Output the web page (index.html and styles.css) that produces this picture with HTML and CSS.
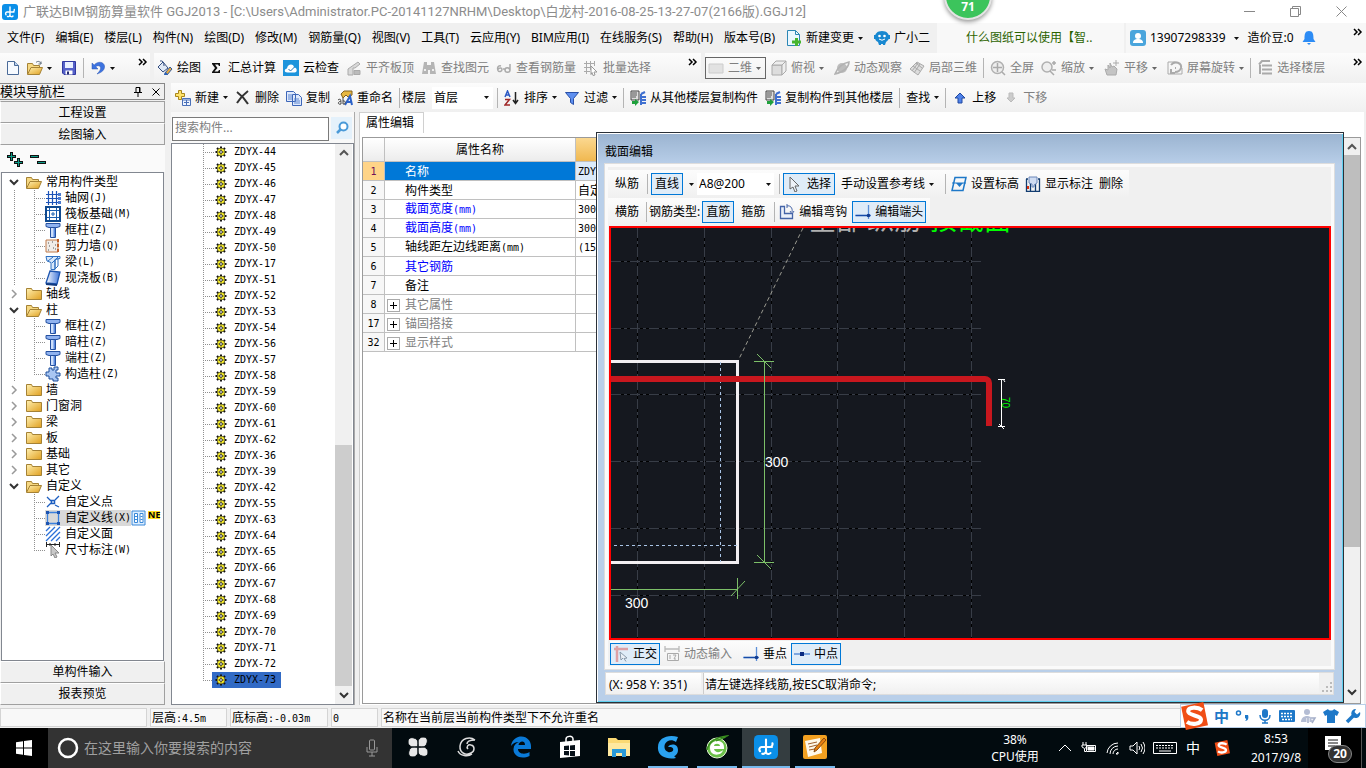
FILE: index.html
```html
<!DOCTYPE html>
<html lang="zh-CN">
<head>
<meta charset="utf-8">
<title>广联达BIM钢筋算量软件 GGJ2013</title>
<link rel="stylesheet" href="styles.css">
</head>
<body>
<svg class="defs" aria-hidden="true">
  <defs>
    <linearGradient id="gold" x1="0" y1="0" x2="1" y2="1"><stop offset="0" stop-color="#fff0b0"/><stop offset="1" stop-color="#e0a020"/></linearGradient>
    <linearGradient id="blu" x1="0" y1="0" x2="1" y2="0"><stop offset="0" stop-color="#fff"/><stop offset="1" stop-color="#3a72d8"/></linearGradient>
  </defs>
  <symbol id="caret" viewBox="0 0 5 3"><path d="M0 0h5L2.500 3z"/></symbol>
  <symbol id="logo" viewBox="0 0 16 16"><rect width="16" height="16" rx="3" fill="#0b8fe8"/><path d="M8 3v8.500a1.700 1.700 0 0 0 3 .500M12 8H5a1.700 1.700 0 0 0-1 2.800M12.300 5.500a2.200 2.200 0 0 1-1.300 2.500M5.500 12.500A2 2 0 0 0 8 11" fill="none" stroke="#fff" stroke-width="1.400" stroke-linecap="round"/></symbol>
  <symbol id="new" viewBox="0 0 16 16"><path d="M2.500 1.500h7l4 4v9h-11z" fill="#f6faff" stroke="#4a6a98"/><path d="M9.500 1.500v4h4" fill="#bcd2ee" stroke="#4a6a98"/></symbol>
  <symbol id="open" viewBox="0 0 16 16"><path d="M.5 14V3.500h5l1 2h6V8" fill="#f6d882" stroke="#a58235"/><path d="M.5 14.500 4 7.500h11.500l-3 7z" fill="url(#gold)" stroke="#a58235"/></symbol>
  <symbol id="openf" viewBox="0 0 16 16"><use href="#open"/><path d="M9 2.500c2-2 4-1 5 1m0-2v2.500h-2.500" fill="none" stroke="#5a6a7a"/></symbol>
  <symbol id="closed" viewBox="0 0 16 16"><path d="M.5 13.500v-11h5l1 2h9v9z" fill="url(#gold)" stroke="#a58235"/></symbol>
  <symbol id="save" viewBox="0 0 16 16"><path d="M1.500 1.500h13v13H3l-1.500-1.500z" fill="#5460c8" stroke="#3038a0"/><path d="M4 2h8v6H4z" fill="#e8efff"/><path d="M4.500 10.500h7v4h-7z" fill="#fff"/><path d="M6 11.500h2v3H6z" fill="#222a70"/></symbol>
  <symbol id="undo" viewBox="0 0 16 16"><path d="M2 3v6h6L5.800 6.800C8 4.500 11.500 6 10.500 9c-.4 1.500-1.500 3-3.500 5 5-1.500 8-4.500 7.500-8C14 2 8 .5 4.200 5z" fill="#3d73e0" stroke="#2a55b0" stroke-width=".5"/></symbol>
  <symbol id="paint" viewBox="0 0 16 16"><path d="m1 7 5-5 5 6-5 4z" fill="#dfe8f5" stroke="#334d80"/><path d="M3 1q4-1 4 5" fill="none" stroke="#334d80"/><path d="m8 13 5-6 2 2-5 6z" fill="#e7a93c" stroke="#345c9c"/><path d="M7 15c0-2 1-3 3-2l1 2z" fill="#2d62b5"/></symbol>
  <symbol id="sigma" viewBox="0 0 16 16"><path d="M4 3h8v3h-1l-1-1.500H7L9.500 8l-3 3.500H10l1-1.500h1V13H4v-1l3-4-3-4z" fill="#111"/></symbol>
  <symbol id="cloud" viewBox="0 0 16 16"><rect width="16" height="16" fill="#1d94dc"/><path d="M4.500 12.500c-4 0-3-4-.5-4 .5-5 7-5 7-1 3-.5 4 5 .5 5z" fill="#fff"/><path d="m5.500 9 2 2 4-4" fill="none" stroke="#1d70b0"/></symbol>
  <symbol id="align" viewBox="0 0 16 16"><path d="M2 9 12 2l2 2-5 4H7v7H2z" fill="#d8d8d8" stroke="#aaa"/><path d="M8 10.500h6v4H8z" fill="#bbb" stroke="#aaa"/></symbol>
  <symbol id="bino" viewBox="0 0 16 16"><path d="M3 2h3v3h4V2h3l2 12H9v-4H7v4H1z" fill="#b5b5b5"/><path d="M3 10h2m6 0h2" stroke="#eee" stroke-width="2"/></symbol>
  <symbol id="glass" viewBox="0 0 16 16"><path d="M5 6C2 5 1 8 2 10.500c1 2 4 1 4-1 0-2-3-2-4 0M7 9h2m5-5v6c0 3-5 3-5 0s4-3 5 0" fill="none" stroke="#aaa" stroke-width="1.500"/></symbol>
  <symbol id="batch" viewBox="0 0 16 16"><path d="M1 3.500h11M1 7.500h7M1 11.500h6M3.500 1v13M7.500 1v9M11.500 1v5" stroke="#aaa"/><path d="m8 6 6 6h-3l1 3-2 .5-1-3-1 2z" fill="#fff" stroke="#999"/></symbol>
  <symbol id="flat" viewBox="0 0 16 16"><path d="M1 4h14v9H1z" fill="#e2e2e2" stroke="#ccc"/></symbol>
  <symbol id="cube" viewBox="0 0 16 16"><path d="M1 5h10v10H1z" fill="#ddd" stroke="#aaa"/><path d="m1 5 4-4h10v10l-4 4V5zm10 0 4-4" fill="#eee" stroke="#aaa"/></symbol>
  <symbol id="orbit" viewBox="0 0 16 16"><circle cx="8" cy="8" r="5" fill="#bdbdbd"/><path d="M1 14C3 8 9 3 15 2c0 5-5 10-14 12z" fill="none" stroke="#b2b2b2" stroke-width="1.500"/></symbol>
  <symbol id="part" viewBox="0 0 16 16"><path d="m1 9 7-7 7 4-6 9z" fill="#ddd" stroke="#aaa"/><path d="m4 6 7 5M7 3l6 5M5 13l6-9M3 11l6-8" stroke="#aaa"/></symbol>
  <symbol id="full" viewBox="0 0 16 16"><circle cx="7.500" cy="7.500" r="6" fill="#eee" stroke="#b0b0b0" stroke-width="1.500"/><path d="M3 7.500h9M7.500 3v9m4.500 0 3 3" stroke="#aaa" stroke-width="1.500"/></symbol>
  <symbol id="zoomi" viewBox="0 0 16 16"><circle cx="6" cy="7" r="5" fill="#eee" stroke="#b0b0b0" stroke-width="1.500"/><path d="m9 11 4 4M11 3h4m-2-2v4m-2 5h4" stroke="#aaa" stroke-width="1.500"/></symbol>
  <symbol id="hand" viewBox="0 0 16 16"><path d="M3 15 1 9l3 1V5l2 3V3l2 4 2-1 3 3-1 6z" fill="#c4c4c4" stroke="#aaa"/><path d="M9 3h6m-3-3v6" stroke="#aaa"/></symbol>
  <symbol id="rot" viewBox="0 0 16 16"><path d="M1 2h7M1 2v12h14V8" fill="none" stroke="#aaa"/><path d="M4 5c4-5 11-2 10 3-1 3-4 4-6 4m-4-3v4h4M8 8h1" fill="none" stroke="#aaa" stroke-width="2"/></symbol>
  <symbol id="floors" viewBox="0 0 16 16"><path d="M2 4.500 5 1h8M5 5.500h10M5 9.500h10M5 13.500h10M3 5v9" fill="none" stroke="#aaa" stroke-width="2"/></symbol>
  <symbol id="addnew" viewBox="0 0 16 16"><path d="M3.500.5h3v3h3v3h-3v3h-3v-3h-3v-3h3z" fill="#ffe36a" stroke="#a8861c"/><path d="M7.500 8.500h8v7h-8z" fill="#eef4ff" stroke="#4a70b8"/><path d="M8 10h7M9 12.500h5M11.500 10v5" stroke="#4a70b8"/></symbol>
  <symbol id="del" viewBox="0 0 16 16"><path d="M2 2c4 3 8 7 11 12M13 1C9 4 5 8 2 13" fill="none" stroke="#333" stroke-width="2"/></symbol>
  <symbol id="copy" viewBox="0 0 16 16"><path d="M.5 1.500h7l2 2v8h-9zM6.500 4.500h6l3 3v8h-9z" fill="#dfe9fc" stroke="#3d66b8"/><path d="M2 5h4M2 7h4M2 9h4M8 9h5M8 11h6M8 13h6" stroke="#5d86d0"/></symbol>
  <symbol id="ren" viewBox="0 0 16 16"><path d="M4 4 7 1h8v4l-4 2-2-2-3 3z" fill="#e7b740" stroke="#806020"/><path d="m8 15 5-9 2 9m-5-3h4" fill="none" stroke="#2d62c8" stroke-width="2"/><path d="M1 10c3-2 3 0 3 4-3 1-4-2 0-3m2-3v6c3 1 3-4 0-3" fill="none" stroke="#444"/></symbol>
  <symbol id="sort" viewBox="0 0 16 16"><path d="m1 7 2.500-6L6 7M2 5h3" fill="none" stroke="#2c59c4" stroke-width="1.500"/><path d="M1 9.500h4.500L1 15h5" fill="none" stroke="#a02828" stroke-width="1.500"/><path d="M11.500 2v11m-2.500-3 2.500 3.500L14 10" fill="none" stroke="#222" stroke-width="1.500"/></symbol>
  <symbol id="funnel" viewBox="0 0 16 16"><path d="M1.500 2.500h13l-5 6v6l-3-2v-4z" fill="#5e8ff0" stroke="#2950a8"/></symbol>
  <symbol id="fcopy" viewBox="0 0 16 16"><path d="M1 1h8v9H1z" fill="#ddd" stroke="#444"/><path d="M2 3h5M2 5h5M2 7h4" stroke="#555"/><path d="M2 11h3v-2l4 3-4 4v-2H2z" fill="#1fa03c"/><path d="M11 4l4-2M11 7h5M11 10h5M11 13h5M11 4v11" stroke="#3f70d0" stroke-width="2"/></symbol>
  <symbol id="up" viewBox="0 0 16 16"><path d="m8 3 5 5h-3v5H6V8H3z" fill="#4f82ea" stroke="#2048a0"/></symbol>
  <symbol id="down" viewBox="0 0 16 16"><path d="m8 12 4-4h-2V3H6v5H4z" fill="#ccc" stroke="#bbb"/></symbol>
  <symbol id="chg" viewBox="0 0 16 16"><path d="M1.500.5h8l4 4v11h-12z" fill="#eaf7ff" stroke="#2b87b5"/><path d="M9.500.5v4h4" fill="none" stroke="#2b87b5"/><path d="M9 8h3v2.500h3v3h-3V16H9v-2.500H6v-3h3z" fill="#46b52e"/></symbol>
  <symbol id="bot" viewBox="0 0 16 16"><path d="M8 1c5 0 7 3 7 6s-2 4-3 5l-1 3H9v-1H7v1H5l-1-3C2 11 1 10 1 7s2-6 7-6z" fill="#1888d0"/><path d="M0 5h3v4H0zM13 5h3v4h-3z" fill="#1888d0"/><circle cx="5.500" cy="6" r="1.300" fill="#fff"/><circle cx="10.500" cy="6" r="1.300" fill="#fff"/><path d="M5 9q3 2.500 6 0" fill="none" stroke="#fff"/></symbol>
  <symbol id="user" viewBox="0 0 16 16"><rect width="16" height="16" rx="3" fill="#4aa5dc"/><circle cx="8" cy="6" r="3" fill="#fff"/><path d="M3 13c0-3 2-4 5-4s5 1 5 4z" fill="#fff"/></symbol>
  <symbol id="bell" viewBox="0 0 16 16"><path d="M8 1c4 0 4.500 3 4.500 8l2 3h-13l2-3C3.500 4 4 1 8 1zM6 13h4l-2 2z" fill="#2d8cf5"/></symbol>
  <symbol id="gear" viewBox="0 0 12 12"><path d="M6 .5v11M.5 6h11M2 2l8 8m0-8-8 8" stroke="#111" stroke-width="2"/><circle cx="6" cy="6" r="4" fill="#f8ee20" stroke="#333" stroke-width=".6"/><path d="M6 2v8M2 6h8" stroke="#444" stroke-width=".6"/><circle cx="6" cy="6" r="1.400" fill="#fff" stroke="#111" stroke-width=".8"/></symbol>
  <symbol id="axis" viewBox="0 0 16 16"><path d="M1 4.500h12M1 8.500h12M1 12.500h12M3.500 1v14M7.500 1v14M11.500 1v14" stroke="#1d54b8" stroke-width="1.200"/><path d="M13 3h3v3h-3zM13 7h3v3h-3zM13 11h3v3h-3z" fill="#4a7ad0"/></symbol>
  <symbol id="raft" viewBox="0 0 16 16"><path d="M1 1h14v14H1z" fill="#fff" stroke="#104a90" stroke-width="2"/><path d="M4.500 2v12M11.500 2v12M2 4.500h12M2 11.500h12M7 7h2v2H7z" fill="none" stroke="#1d60b0"/></symbol>
  <symbol id="col" viewBox="0 0 16 16"><path d="M1 1.500h14v3l-3 1H4l-3-1z" fill="#8fb2f0" stroke="#2450a0"/><path d="M5.500 5.500h5v10h-5z" fill="#cfe0fb" stroke="#2450a0"/><path d="M8.500 6h1.500v9H8.500z" fill="#5a8ae0"/></symbol>
  <symbol id="wall" viewBox="0 0 16 16"><path d="M1 2h12v12H1z" fill="#f0ece8" stroke="#c07a4a"/><path d="M3 5h1m3-1h1m2 3h1M4 8h1m3 2h1m-6 2h1m6-1h1" stroke="#555"/><path d="M13 1v14" stroke="#c0602a" stroke-width="2" stroke-dasharray="3 2"/></symbol>
  <symbol id="beam" viewBox="0 0 16 16"><path d="M1 2.500h14v2l-5 1v10H6v-7L2 7z" fill="#d9e8fa" stroke="#2d6fc0"/><path d="m3 7 5-4m-1 6 6-6M10 6v9l3-3V4" fill="none" stroke="#2d6fc0"/></symbol>
  <symbol id="slab" viewBox="0 0 16 16"><path d="m5 1 10 1-3 12L1 13z" fill="url(#blu)" stroke="#1d55b0" stroke-width="1.300"/><path d="m1 14 11 1" stroke="#123a80" stroke-width="2"/></symbol>
  <symbol id="ccol" viewBox="0 0 16 16"><path d="M4 2h3v2h2V1h4v3h-2v3h4v3h-4v2h2v3H8v-2H4v-3H1V6h3z" fill="#a9c6f2" stroke="#1d4e9c"/></symbol>
  <symbol id="cpt" viewBox="0 0 16 16"><path d="m2 3 4 4m4 4 4 2M2 13l4-4m4-3 4-4" stroke="#1d5ec0" stroke-width="1.300"/><path d="M6.500 6.500h3v3h-3z" fill="#fff" stroke="#1d5ec0" stroke-width="1.500"/></symbol>
  <symbol id="cline" viewBox="0 0 16 16"><path d="M2.500 2.500h11v11h-11z" fill="none" stroke="#3a80dd" stroke-width="1.300"/><path d="M1 1h3v3H1zM12 1h3v3h-3zM1 12h3v3H1zM12 12h3v3h-3z" fill="#1d54b0"/></symbol>
  <symbol id="carea" viewBox="0 0 16 16"><path d="m1 5 4-4M1 10l9-9M1 15 15 1M6 15l9-9M11 15l4-4" stroke="#2a70d8" stroke-width="1.300"/></symbol>
  <symbol id="dim" viewBox="0 0 16 16"><path d="M1 2.500h14M1.500 0v5M14.500 0v5M5 1v3M10 1v3" stroke="#222"/><path d="m6 3 8 8h-4l2 4-2 1-2-4-2 2z" fill="#c8c8c8" stroke="#888"/></symbol>
  <symbol id="cursor" viewBox="0 0 16 16"><path d="m3 1 9 9H8l2 5-2 1-2-5-3 2z" fill="#eef2f8" stroke="#666"/></symbol>
  <symbol id="elev" viewBox="0 0 16 16"><path d="M4 1.500h11l-3 13H1z" fill="none" stroke="#1e78c8" stroke-width="1.500"/><path d="M1 7h14" stroke="#1e78c8"/><path d="M5 7h7l-3.500 4z" fill="#1e78c8"/></symbol>
  <symbol id="anno" viewBox="0 0 16 16"><path d="M1 3h2M1.500 3v12.500h13V3H13M5.500 7v8m5-7v7" fill="none" stroke="#123c70" stroke-width="1.300"/><path d="M4 1h8v6L9 9v2H7V8L4 7z" fill="#cfdcf2" stroke="#6a86b8"/><path d="M2 10h2v3H2z" fill="#d83010"/></symbol>
  <symbol id="hook" viewBox="0 0 16 16"><path d="M1.500 2.500h4v7h8v5h-12z" fill="#eaf0fa" stroke="#4464a8" stroke-width="1.300"/><path d="M8 2c3-1 6 2 5 6M8 0v4m3 3 2 3 2-3" fill="none" stroke="#4464a8"/></symbol>
  <symbol id="perp" viewBox="0 0 16 16"><path d="M0 11.500h16M13.500 1v14" stroke="#5b8fd8" stroke-width="1.300"/><path d="M1 11.500h12" stroke="#174ba8" stroke-width="1.300"/><circle cx="13.500" cy="11.500" r="1.800" fill="#123c90"/></symbol>
  <symbol id="mid" viewBox="0 0 16 16"><path d="M0 8h16" stroke="#5b8fd8" stroke-width="1.500"/><path d="M6 6h4v4H6z" fill="#0a2a80"/></symbol>
  <symbol id="orth" viewBox="0 0 16 16"><path d="M1 3h14M4 0v16" stroke="#dda0a4" stroke-width="2.500"/><path d="m7 6 7 6-3 .5 2 3M7 6l1 8 2-2" fill="#eef2f8" stroke="#8899aa"/></symbol>
  <symbol id="dyn" viewBox="0 0 16 16"><path d="M1 0v6M15 0v6M1 3h14" stroke="#bbb" stroke-width="1.300"/><path d="M3.500 7.500h11v7h-11z" fill="#f6f6f6" stroke="#aaa"/><path d="M6 9v4m3-4h3l-2 4h2" fill="none" stroke="#aaa"/></symbol>
  <symbol id="find" viewBox="0 0 16 16"><circle cx="9.500" cy="6.500" r="4" fill="#fff" stroke="#4a9ad8" stroke-width="2"/><path d="m7 9-4 4" stroke="#4a9ad8" stroke-width="2.500"/></symbol>
  <symbol id="expd" viewBox="0 0 12 12"><path d="m2 4 4 4 4-4" fill="none" stroke="#333" stroke-width="2"/></symbol>
  <symbol id="expr" viewBox="0 0 12 12"><path d="m4 2 4 4-4 4" fill="none" stroke="#999" stroke-width="1.500"/></symbol>
  <symbol id="expu" viewBox="0 0 12 12"><path d="m2 8 4-4 4 4" fill="none" stroke="#555" stroke-width="2"/></symbol>
  <symbol id="more" viewBox="0 0 10 8"><path d="m1 1 3 3-3 3m4-6 3 3-3 3" fill="none" stroke="#000" stroke-width="1.500"/></symbol>
  <symbol id="sogou" viewBox="0 0 24 24"><path d="M1 4 20 0l4 20-19 4z" fill="#f04e16"/><path d="M19 7C15 4 7 4 7 8s11 3 11 7-8 5-12 2" fill="none" stroke="#fff" stroke-width="3.500"/></symbol>
  <symbol id="swirl" viewBox="0 0 24 24"><path d="M20 5c-5-4-14-2-15 6-.5 7 6 10 11 7 4-2 4-7 0-8-3-1-5 2-3 4M20 5c-4 0-8 1-8 4M3 16c2 5 10 6 14 3" fill="none" stroke="currentColor" stroke-width="1.500"/></symbol>
</svg>

<header class="title">
  <svg class="i16"><use href="#logo"/></svg>
  <h1>广联达BIM钢筋算量软件 GGJ2013 - [C:\Users\Administrator.PC-20141127NRHM\Desktop\白龙村-2016-08-25-13-27-07(2166版).GGJ12]</h1>
  <div class="winctl">
    <button aria-label="最小化"><svg viewBox="0 0 11 11"><path d="M0 5.500h11"/></svg></button>
    <button aria-label="还原"><svg viewBox="0 0 11 11"><path d="M.5 2.500h8v8h-8zM2.500 2.500v-2h8v8h-2"/></svg></button>
    <button aria-label="关闭"><svg viewBox="0 0 11 11"><path d="m.5.500 10 10m0-10-10 10"/></svg></button>
  </div>
  <div class="ball">71</div>
</header>

<nav class="menu">
  <div class="menus">
    <button>文件(F)</button><button>编辑(E)</button><button>楼层(L)</button><button>构件(N)</button><button>绘图(D)</button><button>修改(M)</button><button>钢筋量(Q)</button><button>视图(V)</button><button>工具(T)</button><button>云应用(Y)</button><button>BIM应用(I)</button><button>在线服务(S)</button><button>帮助(H)</button><button>版本号(B)</button>
    <button><svg class="i16"><use href="#chg"/></svg>新建变更<svg class="car"><use href="#caret"/></svg></button>
    <button><svg class="i16"><use href="#bot"/></svg>广小二</button>
  </div>
  <a class="tip" href="#">什么图纸可以使用【智..</a>
  <div class="acct">
    <button><svg class="i16"><use href="#user"/></svg>13907298339<svg class="car"><use href="#caret"/></svg></button>
    <span>造价豆:0</span>
    <svg class="i16"><use href="#bell"/></svg>
    <svg class="more"><use href="#more"/></svg>
  </div>
</nav>

<div class="bars">
  <div class="bar file">
    <button aria-label="新建"><svg class="i16"><use href="#new"/></svg></button>
    <button aria-label="打开"><svg class="i16"><use href="#openf"/></svg><svg class="car"><use href="#caret"/></svg></button>
    <button aria-label="保存"><svg class="i16"><use href="#save"/></svg></button>
    <i class="sep"></i>
    <button aria-label="撤销"><svg class="i16"><use href="#undo"/></svg><svg class="car"><use href="#caret"/></svg></button>
    <svg class="more"><use href="#more"/></svg>
  </div>
  <div class="bar draw">
    <button><svg class="i16"><use href="#paint"/></svg>绘图</button>
    <button><svg class="i16"><use href="#sigma"/></svg>汇总计算</button>
    <button><svg class="i16"><use href="#cloud"/></svg>云检查</button>
    <button disabled><svg class="i16"><use href="#align"/></svg>平齐板顶</button>
    <button disabled><svg class="i16"><use href="#bino"/></svg>查找图元</button>
    <button disabled><svg class="i16"><use href="#glass"/></svg>查看钢筋量</button>
    <button disabled><svg class="i16"><use href="#batch"/></svg>批量选择</button>
    <svg class="more"><use href="#more"/></svg>
  </div>
  <div class="bar view">
    <button class="boxed" disabled><svg class="i16"><use href="#flat"/></svg>二维<svg class="car"><use href="#caret"/></svg></button>
    <button disabled><svg class="i16"><use href="#cube"/></svg>俯视<svg class="car"><use href="#caret"/></svg></button>
    <button disabled><svg class="i16"><use href="#orbit"/></svg>动态观察</button>
    <button disabled><svg class="i16"><use href="#part"/></svg>局部三维</button>
    <i class="sep"></i>
    <button disabled><svg class="i16"><use href="#full"/></svg>全屏</button>
    <button disabled><svg class="i16"><use href="#zoomi"/></svg>缩放<svg class="car"><use href="#caret"/></svg></button>
    <button disabled><svg class="i16"><use href="#hand"/></svg>平移<svg class="car"><use href="#caret"/></svg></button>
    <button class="tight" disabled><svg class="i16"><use href="#rot"/></svg>屏幕旋转<svg class="car"><use href="#caret"/></svg></button>
    <i class="sep"></i>
    <button disabled><svg class="i16"><use href="#floors"/></svg>选择楼层</button>
    <svg class="more"><use href="#more"/></svg>
  </div>
</div>

<main class="work">
  <aside class="nav">
    <div class="navhead"><span>模块导航栏</span><button aria-label="固定"><svg viewBox="0 0 8 10"><path d="M2 .5h4v5H2zM0 5.500h8M4 6v4M5.500 1v4" /></svg></button><button aria-label="关闭"><svg viewBox="0 0 8 8"><path d="m.5.500 7 7m0-7-7 7"/></svg></button></div>
    <button class="sec">工程设置</button>
    <button class="sec">绘图输入</button>
    <div class="pm">
      <svg width="40" height="16" viewBox="0 0 40 16"><path d="M4.500 0v9M0 4.500h9M11.500 6v9M7 10.500h9M23 4.500h9M30 10.500h9" stroke="#111" stroke-width="3"/><path d="M4.500 1v7M1 4.500h7M11.500 7v7M8 10.500h7M24 4.500h7M31 10.500h7" stroke="#0c9c88"/></svg>
    </div>
    <div class="tree">
      <div class="grp"><svg class="ex"><use href="#expd"/></svg><svg class="i16"><use href="#open"/></svg>常用构件类型</div>
      <ul class="cont">
        <li><svg class="i16"><use href="#axis"/></svg>轴网<span class="m">(J)</span></li>
        <li><svg class="i16"><use href="#raft"/></svg>筏板基础<span class="m">(M)</span></li>
        <li><svg class="i16"><use href="#col"/></svg>框柱<span class="m">(Z)</span></li>
        <li><svg class="i16"><use href="#wall"/></svg>剪力墙<span class="m">(Q)</span></li>
        <li><svg class="i16"><use href="#beam"/></svg>梁<span class="m">(L)</span></li>
        <li><svg class="i16"><use href="#slab"/></svg>现浇板<span class="m">(B)</span></li>
      </ul>
      <div class="grp"><svg class="ex"><use href="#expr"/></svg><svg class="i16"><use href="#closed"/></svg>轴线</div>
      <div class="grp"><svg class="ex"><use href="#expd"/></svg><svg class="i16"><use href="#open"/></svg>柱</div>
      <ul class="cont">
        <li><svg class="i16"><use href="#col"/></svg>框柱<span class="m">(Z)</span></li>
        <li><svg class="i16"><use href="#col"/></svg>暗柱<span class="m">(Z)</span></li>
        <li><svg class="i16"><use href="#col"/></svg>端柱<span class="m">(Z)</span></li>
        <li><svg class="i16"><use href="#ccol"/></svg>构造柱<span class="m">(Z)</span></li>
      </ul>
      <div class="grp"><svg class="ex"><use href="#expr"/></svg><svg class="i16"><use href="#closed"/></svg>墙</div>
      <div class="grp"><svg class="ex"><use href="#expr"/></svg><svg class="i16"><use href="#closed"/></svg>门窗洞</div>
      <div class="grp"><svg class="ex"><use href="#expr"/></svg><svg class="i16"><use href="#closed"/></svg>梁</div>
      <div class="grp"><svg class="ex"><use href="#expr"/></svg><svg class="i16"><use href="#closed"/></svg>板</div>
      <div class="grp"><svg class="ex"><use href="#expr"/></svg><svg class="i16"><use href="#closed"/></svg>基础</div>
      <div class="grp"><svg class="ex"><use href="#expr"/></svg><svg class="i16"><use href="#closed"/></svg>其它</div>
      <div class="grp"><svg class="ex"><use href="#expd"/></svg><svg class="i16"><use href="#open"/></svg>自定义</div>
      <ul>
        <li><svg class="i16"><use href="#cpt"/></svg>自定义点</li>
        <li><span class="on"><svg class="i16"><use href="#cline"/></svg>自定义线<span class="m">(X)</span></span><svg class="i16" viewBox="0 0 16 16"><path d="M1 1h13v14H1z" fill="#dceeff" stroke="#3a88d8"/><path d="M3.500 3.500h3v9h-3zM9 3.500h3v9H9z" fill="#fff" stroke="#3a88d8"/><path d="M4 6.500h2M4 9.500h2M9.500 6.500h2M9.500 9.500h2" stroke="#3a88d8"/></svg><b class="ne">NE</b></li>
        <li><svg class="i16"><use href="#carea"/></svg>自定义面</li>
        <li><svg class="i16"><use href="#dim"/></svg>尺寸标注<span class="m">(W)</span></li>
      </ul>
    </div>
    <button class="sec flatb">单构件输入</button>
    <button class="sec flatb">报表预览</button>
  </aside>

  <section class="right">
    <div class="bar sub">
      <button class="tight"><svg class="i16"><use href="#addnew"/></svg>新建<svg class="car"><use href="#caret"/></svg></button>
      <button><svg class="i16"><use href="#del"/></svg>删除</button>
      <button><svg class="i16"><use href="#copy"/></svg>复制</button>
      <button><svg class="i16"><use href="#ren"/></svg>重命名</button>
      <i class="sep"></i>
      <label class="pick">楼层 <span class="sel"><select><option>首层</option></select><svg class="car"><use href="#caret"/></svg></span></label>
      <i class="sep"></i>
      <button class="tight"><svg class="i16"><use href="#sort"/></svg>排序<svg class="car"><use href="#caret"/></svg></button>
      <button class="tight"><svg class="i16"><use href="#funnel"/></svg>过滤<svg class="car"><use href="#caret"/></svg></button>
      <i class="sep"></i>
      <button><svg class="i16"><use href="#fcopy"/></svg>从其他楼层复制构件</button>
      <button><svg class="i16"><use href="#fcopy"/></svg>复制构件到其他楼层</button>
      <i class="sep"></i>
      <button class="tight">查找<svg class="car"><use href="#caret"/></svg></button>
      <i class="sep"></i>
      <button><svg class="i16"><use href="#up"/></svg>上移</button>
      <button disabled><svg class="i16"><use href="#down"/></svg>下移</button>
    </div>
    <div class="panes">
      <div class="list">
        <form class="search"><input type="text" placeholder="搜索构件..." aria-label="搜索构件"><button type="button" aria-label="搜索"><svg class="i16"><use href="#find"/></svg></button></form>
        <div class="items">
          <ul class="m">
            <li><svg><use href="#gear"/></svg>ZDYX-44</li><li><svg><use href="#gear"/></svg>ZDYX-45</li><li><svg><use href="#gear"/></svg>ZDYX-46</li><li><svg><use href="#gear"/></svg>ZDYX-47</li><li><svg><use href="#gear"/></svg>ZDYX-48</li><li><svg><use href="#gear"/></svg>ZDYX-49</li><li><svg><use href="#gear"/></svg>ZDYX-50</li><li><svg><use href="#gear"/></svg>ZDYX-17</li><li><svg><use href="#gear"/></svg>ZDYX-51</li><li><svg><use href="#gear"/></svg>ZDYX-52</li><li><svg><use href="#gear"/></svg>ZDYX-53</li><li><svg><use href="#gear"/></svg>ZDYX-54</li><li><svg><use href="#gear"/></svg>ZDYX-56</li><li><svg><use href="#gear"/></svg>ZDYX-57</li><li><svg><use href="#gear"/></svg>ZDYX-58</li><li><svg><use href="#gear"/></svg>ZDYX-59</li><li><svg><use href="#gear"/></svg>ZDYX-60</li><li><svg><use href="#gear"/></svg>ZDYX-61</li><li><svg><use href="#gear"/></svg>ZDYX-62</li><li><svg><use href="#gear"/></svg>ZDYX-36</li><li><svg><use href="#gear"/></svg>ZDYX-39</li><li><svg><use href="#gear"/></svg>ZDYX-42</li><li><svg><use href="#gear"/></svg>ZDYX-55</li><li><svg><use href="#gear"/></svg>ZDYX-63</li><li><svg><use href="#gear"/></svg>ZDYX-64</li><li><svg><use href="#gear"/></svg>ZDYX-65</li><li><svg><use href="#gear"/></svg>ZDYX-66</li><li><svg><use href="#gear"/></svg>ZDYX-67</li><li><svg><use href="#gear"/></svg>ZDYX-68</li><li><svg><use href="#gear"/></svg>ZDYX-69</li><li><svg><use href="#gear"/></svg>ZDYX-70</li><li><svg><use href="#gear"/></svg>ZDYX-71</li><li><svg><use href="#gear"/></svg>ZDYX-72</li><li class="cur"><span><svg><use href="#gear"/></svg>ZDYX-73</span></li>
          </ul>
          <div class="scroll low"><svg><use href="#expu"/></svg><i></i><b></b><svg><use href="#expd"/></svg></div>
        </div>
      </div>
      <div class="props">
        <div class="tab">属性编辑</div>
        <div class="sheet">
          <table>
            <thead><tr><th class="n"></th><th class="k">属性名称</th><th class="v"></th></tr></thead>
            <tbody>
              <tr class="cur"><th><span class="m">1</span></th><td>名称</td><td><span class="m">ZDYX-73</span></td></tr>
              <tr><th><span class="m">2</span></th><td>构件类型</td><td>自定义线</td></tr>
              <tr class="key"><th><span class="m">3</span></th><td>截面宽度<span class="m">(mm)</span></td><td><span class="m">300</span></td></tr>
              <tr class="key"><th><span class="m">4</span></th><td>截面高度<span class="m">(mm)</span></td><td><span class="m">300</span></td></tr>
              <tr><th><span class="m">5</span></th><td>轴线距左边线距离<span class="m">(mm)</span></td><td><span class="m">(150)</span></td></tr>
              <tr class="key"><th><span class="m">6</span></th><td>其它钢筋</td><td></td></tr>
              <tr><th><span class="m">7</span></th><td>备注</td><td></td></tr>
              <tr class="fold"><th><span class="m">8</span></th><td><button aria-label="展开"></button>其它属性</td><td></td></tr>
              <tr class="fold"><th><span class="m">17</span></th><td><button aria-label="展开"></button>锚固搭接</td><td></td></tr>
              <tr class="fold"><th><span class="m">32</span></th><td><button aria-label="展开"></button>显示样式</td><td></td></tr>
            </tbody>
          </table>
          <div class="scroll high"><svg><use href="#expu"/></svg><b></b><i></i><svg><use href="#expd"/></svg></div>
        </div>
      </div>
    </div>
  </section>

  <section class="dlg" aria-label="截面编辑">
    <h2>截面编辑</h2>
    <div class="dbody">
      <div class="bar d1">
        <button>纵筋</button><i class="sep"></i>
        <button class="on">直线</button><svg class="car"><use href="#caret"/></svg>
        <span class="sel"><select aria-label="钢筋规格"><option>A8@200</option></select><svg class="car"><use href="#caret"/></svg></span>
        <i class="sep close"></i>
        <button class="on"><svg class="i16"><use href="#cursor"/></svg>选择</button>
        <button>手动设置参考线<svg class="car"><use href="#caret"/></svg></button>
        <i class="sep wide"></i>
        <button><svg class="i16"><use href="#elev"/></svg>设置标高</button>
        <button><svg class="i16"><use href="#anno"/></svg>显示标注</button>
        <button>删除</button>
      </div>
      <div class="bar d2">
        <button>横筋</button><i class="sep"></i>
        <span>钢筋类型:</span>
        <button class="on">直筋</button>
        <button>箍筋</button><i class="sep wide"></i>
        <button><svg class="i16"><use href="#hook"/></svg>编辑弯钩</button>
        <button class="on"><svg class="i16"><use href="#perp"/></svg>编辑端头</button>
      </div>
      <div class="canvas">
        <svg width="100%" height="100%">
          <path stroke="#000" d="M26.500 0v600M93.500 0v600M160.500 0v600M226.500 0v600M293.500 0v600M360.500 0v600M0 33.500h370M0 100.500h370M0 166.500h370M0 233.500h370M0 300.500h370M0 367.500h370"/>
          <path stroke="#383d47" stroke-dasharray="10 3 3 3" d="M26.500 0v600M93.500 0v600M160.500 0v600M226.500 0v600M293.500 0v600M360.500 0v600M0 33.500h370M0 100.500h370M0 166.500h370M0 233.500h370M0 300.500h370M0 367.500h370"/>
          <g font-size="27"><text x="198" y="2" fill="#b0b0b0">全部</text><text x="256" y="2" fill="#b0b0b0">纵筋</text><text x="319" y="2" fill="#00ff00">按截面</text></g>
          <path d="m192 0-65 133" stroke="#9a9a90" stroke-dasharray="4 3"/>
          <path d="M0 133.500h126.500v201H0" fill="none" stroke="#f2eff2" stroke-width="3"/>
          <path d="M109.500 134v200M3 317.500h123" stroke="#a9c4e6" stroke-dasharray="3 3"/>
          <path d="M0 151h374a4 4 0 0 1 4 4v43" fill="none" stroke="#c8171e" stroke-width="6"/>
          <path d="M153.500 133.500v201M143 133.500h20M143 334.500h20M146 126l14 14M146 327l14 14M0 361.500h126M126.500 350v21M120 368l14-15" stroke="#7cbf68" fill="none"/>
          <path d="M390.500 151v48M387 151.500h7M387 198.500h7M392 151l2 3M388 196l5 5" stroke="#fff"/>
          <g fill="#fff" font-size="14"><text x="154" y="239">300</text><text x="14" y="380">300</text></g>
          <text transform="translate(391 169) rotate(90)" fill="#00ff00" font-size="10">70</text>
        </svg>
      </div>
      <div class="bar d3">
        <button class="on"><svg class="i16"><use href="#orth"/></svg>正交</button>
        <button disabled><svg class="i16"><use href="#dyn"/></svg>动态输入</button>
        <button><svg class="i16"><use href="#perp"/></svg>垂点</button>
        <button class="on"><svg class="i16"><use href="#mid"/></svg>中点</button>
      </div>
    </div>
    <div class="dstat"><span>(X: 958 Y: 351)</span><span>请左键选择线筋,按ESC取消命令;</span><svg width="12" height="12" viewBox="0 0 12 12"><path d="M9 0h2v2H9zM9 4h2v2H9zM9 8h2v2H9zM5 4h2v2H5zM5 8h2v2H5zM1 8h2v2H1z" fill="#bbb"/></svg></div>
  </section>
</main>

<footer class="status">
  <span></span><span>层高<span class="m">:4.5m</span></span><span>底标高<span class="m">:-0.03m</span></span><span><span class="m">0</span></span><span>名称在当前层当前构件类型下不允许重名</span>
  <div class="ime">
    <svg width="28" height="28"><use href="#sogou"/></svg>
    <b>中</b>
    <svg class="i16" viewBox="0 0 16 16"><circle cx="3.500" cy="5" r="2" fill="none" stroke="#1e78c8" stroke-width="1.500"/><path d="M10 7h3c1 3 0 6-3 6 1-1 2-2 0-3z" fill="#1e78c8"/></svg>
    <svg class="i16" viewBox="0 0 16 16"><rect x="5" y="1" width="6" height="9" rx="3" fill="#1e78c8"/><path d="M3 7c0 7 10 7 10 0M8 12v3M5 15h6" fill="none" stroke="#1e78c8" stroke-width="1.500"/></svg>
    <svg class="i16" viewBox="0 0 16 16"><rect y="2" width="16" height="12" rx="1" fill="#1e78c8"/><path d="M2 5.500h12M2 8.500h12M3 11.500h10" stroke="#fff" stroke-width="1.500" stroke-dasharray="2 1"/></svg>
    <svg class="i16" viewBox="0 0 16 16"><circle cx="6" cy="4" r="3" fill="#b4bdd4"/><path d="M0 14c0-8 12-8 12 0z" fill="#b4bdd4"/><path d="M7 10v5m3-5h5l-3 5" fill="none" stroke="#fff" stroke-width="3"/><path d="M7 10v5m3-5h4l-3 5" fill="none" stroke="#a4aec8" stroke-width="1.500"/></svg>
    <svg class="i16" viewBox="0 0 16 16"><path d="M5 1c1 2 5 2 6 0l5 3-2 4-2-1v8H4V7L2 8 0 4z" fill="#1e78c8"/></svg>
    <svg class="i16" viewBox="0 0 16 16"><path d="m2 14 7-7" stroke="#1e78c8" stroke-width="3.500"/><path d="M15 4a4.500 4.500 0 1 1-4-3L9.500 4 12 6.500z" fill="#1e78c8"/></svg>
  </div>
</footer>

<div class="task">
  <button class="start" aria-label="开始"><svg width="16" height="16" viewBox="0 0 16 16"><path d="M0 2.200 7 1.200v6.300H0zM8 1 16 0v7.500H8zM0 8.500h7v6.300l-7-1zM8 8.500h8V16l-8-1.100z" fill="#fff"/></svg></button>
  <label class="cort"><svg width="22" height="22" viewBox="0 0 22 22"><circle cx="11" cy="11" r="9" fill="none" stroke="#fff" stroke-width="2.500"/></svg><input type="text" placeholder="在这里输入你要搜索的内容" aria-label="搜索"><svg width="12" height="18" viewBox="0 0 12 18"><rect x="3.500" y="1" width="5" height="10" rx="1" fill="none" stroke="#999"/><path d="M1 8v5h10V8M6 13v4M3 17h6" fill="none" stroke="#999"/></svg></label>
  <div class="apps">
    <button aria-label="风扇"><svg viewBox="0 0 24 24"><path d="M11.500 11.500C8 13 2 12 2 7c0-4 3-5 6-4 4 1 5 5 3.500 8.500zM12.500 11.500C11 8 12 2 17 2c4 0 5 3 4 6-1 4-5 5-8.500 3.500zM12.500 12.500C16 11 22 12 22 17c0 4-3 5-6 4-4-1-5-5-3.500-8.500zM11.500 12.500C13 16 12 22 7 22c-4 0-5-3-4-6 1-4 5-5 8.500-3.500z" fill="#e8e8e8" stroke="#020b0f"/></svg></button>
    <button aria-label="浏览器" class="gap"><svg viewBox="0 0 24 24" color="#ddd"><use href="#swirl"/></svg></button>
    <button aria-label="Edge"><svg viewBox="0 0 24 24"><path d="M2 11C3 4 8 1.500 12.500 1.500 18 1.500 22 6 22 11v3H9c0 5 7 6 11.500 3v4C12 25 4 21 4.500 14 4.800 10 7 8 10 7 6 7 4 8.500 2 11zm7.500-1H16c0-5-6-4-6.500 0z" fill="#0a7ad8"/></svg></button>
    <button aria-label="商店"><svg viewBox="0 0 24 24"><path d="M2 7 22 5v16L2 23z" fill="#fff"/><path d="M8 8V4c0-3 7-4 7 0v3" fill="none" stroke="#fff" stroke-width="1.500"/><path d="m6 11 5-.5V15H6zM12 10.500l5-.5v5h-5zM6 16h5v4.500L6 20zM12 16h5v5h-5z" fill="#061018"/></svg></button>
    <button aria-label="文件"><svg viewBox="0 0 24 24"><path d="M1 3h8l2 2h12v16H1z" fill="#fbd974"/><path d="M1 8h22v13H1z" fill="#ffe9a0"/><path d="M5 22v-8h14v8h-4v-4H9v4z" fill="#2a9ad8"/></svg></button>
    <button aria-label="GLD" class="run"><svg viewBox="0 0 24 24"><path d="M22 2 20 7c-4-3-9-2-11 2-2 5 2 9 6 8 3-1 3-4 0-5h-3c3-4 10-3 10 3 0 4-3 6-4 6l2 2c-9 2-19-2-18-11C2 3 12-1 22 2z" fill="#2aa2f0"/></svg></button>
    <button aria-label="360" class="run"><svg viewBox="0 0 24 24"><circle cx="12" cy="13" r="10" fill="#6cc04a" stroke="#e8f8d8"/><path d="M5 13c0-9 14-9 14-1v2H9c1 4 6 4 9 1-1 6-13 7-13-2zm4-2h6c0-3-6-3-6 0z" fill="#fff"/><path d="M2 15C4 6 13 2 22 1c-4 3-8 3-11 5" fill="none" stroke="#3a9020" stroke-width="1.500"/></svg></button>
    <button aria-label="广联达" class="run act"><svg viewBox="0 0 24 24"><use href="#logo" width="24" height="24"/></svg></button>
    <button aria-label="便签" class="run"><svg viewBox="0 0 24 24"><rect width="24" height="24" rx="2" fill="#f2a020"/><path d="m2 6 15-3 2 15-14 4z" fill="#fff8ea"/><path d="m5 9 9-2M6 12l8-2M6 15l6-1" stroke="#a06030"/><path d="m11 17 1-4L21 3l2 2-9 10z" fill="#e88010" stroke="#8a4a10"/></svg></button>
  </div>
  <div class="cpu">38%<br>CPU使用</div>
  <div class="tray">
    <svg class="i16" viewBox="0 0 16 16"><path d="m2 11 6-6 6 6"/></svg>
    <svg class="i16" viewBox="0 0 16 16"><path d="M5.500 5.500h9v6h-9zM2 2v3M5 2v3M1 5h5v2L3.500 8.500 1 7zM3.500 9v2.500H5"/><path d="M7 7h6v3H7z" fill="#fff"/></svg>
    <svg class="i16" viewBox="0 0 16 16"><path d="M2 13A11 11 0 0 1 13 3M5 14a8 8 0 0 1 8-8M8 14a5 5 0 0 1 5-5M11 14l2-2v2z"/></svg>
    <svg class="i16" viewBox="0 0 16 16"><path d="M1 6h3l4-4v12l-4-4H1zM10 6q1.500 2 0 4M12 4q3 4 0 8M14 2q4 6 0 12"/></svg>
    <svg width="24" height="16" viewBox="0 0 24 16"><path d="M.5 2.500h23v11H.5z"/><path d="M3 5.500h18M3 8h18" stroke-dasharray="2 1"/><path d="M6 11h12"/></svg>
    <span>中</span>
    <svg class="i16 so"><use href="#sogou"/></svg>
  </div>
  <div class="clock">8:53<br>2017/9/8</div>
  <button class="note" aria-label="通知"><svg width="26" height="24" viewBox="0 0 26 24"><path d="M0 0h16v14H8l-4 4v-4H0z" fill="#fff"/><path d="M3 4h10M3 7h10M3 10h7" stroke="#111"/></svg><span>20</span></button>
</div>
</body>
</html>
```
FILE: styles.css
```css
* { box-sizing: border-box; }
body {
  margin: 0; height: 100vh; display: flex; flex-direction: column; overflow: hidden;
  font: 12px/16px "Noto Sans", "Noto Sans CJK SC", sans-serif; color: #000; background: #f0f0f0;
}
button, input, select { font: inherit; color: inherit; margin: 0; padding: 0; border: 0; background: none; border-radius: 0; }
button { display: inline-flex; align-items: center; white-space: nowrap; }
ul { list-style: none; margin: 0; padding: 0; }
svg { flex: none; display: block; }
.defs { position: absolute; width: 0; height: 0; }
.i16 { width: 16px; height: 16px; }
.car { width: 5px; height: 3px; fill: #111; }
.more { width: 10px; height: 8px; align-self: flex-start; margin-top: 5px; }
.m { font-family: "DejaVu Sans Mono", monospace; font-size: 10px; }

.title { height: 23px; flex: none; display: flex; align-items: center; background: #fff; padding-left: 2px; gap: 5px; position: relative; }
.title h1 { margin: 0; font: 400 13px/16px Roboto, "Noto Sans CJK SC", sans-serif; color: #8c8c8c; flex: 1; white-space: nowrap; }
.winctl { display: flex; margin-right: 2px; }
.winctl button { width: 46px; height: 22px; justify-content: center; }
.winctl svg { width: 11px; height: 11px; fill: none; stroke: #888; }
.ball {
  position: absolute; left: 944px; top: -28px; width: 48px; height: 48px; border-radius: 50%; border: 2px solid #e4e4e4;
  background: #3cc45c; color: #fff; font-weight: 700; text-align: center; padding-top: 25px; box-shadow: 0 2px 4px #999; z-index: 2;
}

.menu { height: 30px; flex: none; display: flex; }
.menus { display: flex; gap: 11px; padding-left: 7px; width: 937px; flex: none; }
.menus button, .acct button { gap: 4px; }
.acct .car { margin-left: 4px; }
.tip { width: 187px; flex: none; background: #f8f8f8; color: #2b6400; text-decoration: none; padding: 7px 0 0 29px; margin-right: 2px; white-space: nowrap; }
.acct { flex: 1; display: flex; align-items: center; gap: 9px; background: #f7f7f7; padding: 0 3px 0 4px; }
.acct .i16:nth-of-type(1) { margin-left: -2px; }
.acct button .i16:nth-of-type(1) { margin-left: 0; }
.acct .more, .draw .more, .view .more { margin-left: auto; }

.bars { height: 30px; flex: none; display: flex; gap: 4px; }
.bar { display: flex; align-items: center; gap: 7px; height: 30px; background: linear-gradient(#fcfcfc, #f0f0f0); white-space: nowrap; }
.bar button { gap: 4px; height: 22px; }
.bar button:disabled { color: #808080; }
.bar button:disabled .car { fill: #666; }
.bar button .car { margin: 0 3px 0 0; }
.bar .tight .car { margin: 0; }
.bar button.on { background: #dfecf8; outline: 1px solid #0078d7; outline-offset: -1px; padding: 0 4px; }
.sep { width: 1px; height: 20px; background: #b4b4b4; flex: none; }
.file { width: 150px; padding-left: 5px; gap: 6px; }
.file .more { margin-left: auto; margin-right: 2px; }
.draw { width: 547px; padding: 0 3px; }
.draw .more { margin-right: 0; }
.view { flex: 1; padding: 0 3px 0 0; }
.view .boxed { border: 1px solid #666; padding: 0 1px 0 2px; margin-right: -2px; }
.view .sep { margin: 0 -1px; }

.work { flex: 1; min-height: 0; display: flex; gap: 6px; position: relative; padding-bottom: 1px; }
.nav { width: 165px; flex: none; display: flex; flex-direction: column; }
.navhead { height: 17px; border: 1px solid #888; border-left: 0; display: flex; align-items: center; padding-right: 4px; gap: 10px; margin-bottom: 1px; flex: none; }
.navhead span { flex: 1; font-size: 13px; line-height: 15px; }
.navhead svg { width: 8px; height: 10px; fill: none; stroke: #000; }
.sec { height: 22px; justify-content: center; border: 1px solid #a0a0a0; border-top-color: #fff; border-left-color: #fff; padding-top: 2px; flex: none; }
.navhead + .sec { border-top-color: #a0a0a0; }
.flatb { border-color: #fff #a0a0a0 #a0a0a0 #fff; padding-top: 0; }
.pm { height: 27px; padding: 7px 0 0 7px; background: #fafafa; flex: none; }
.tree { flex: 1; min-height: 0; margin: 0 1px; border: 1px solid #828790; background: #fff; padding-top: 1px; overflow: hidden; }
.grp { display: flex; align-items: center; height: 16px; padding-left: 6px; }
.grp .ex { width: 12px; height: 12px; margin-right: 6px; }
.grp .i16 { margin-right: 4px; }
.tree li {
  display: flex; align-items: center; height: 16px; margin-left: 32px; padding-left: 11px;
  background:
    repeating-linear-gradient(#909090 0 1px, transparent 1px 2px) 0 0 / 1px 100% no-repeat,
    repeating-linear-gradient(90deg, #909090 0 1px, transparent 1px 2px) 0 8px / 11px 1px no-repeat;
}
.tree li:last-child { background-size: 1px 8px, 11px 1px; }
.tree .cont { background: repeating-linear-gradient(#909090 0 1px, transparent 1px 2px) 12px 0 / 1px 100% no-repeat; }
.tree li .i16 { margin-right: 4px; }
.tree .on { display: flex; align-items: center; background: #d9d9d9; }
.tree li .on + .i16 { margin: 0; }
.ne { background: #ffe020; font-size: 9px; line-height: 8px; margin: 0 0 6px 1px; }

.right { flex: 1; min-width: 0; display: flex; flex-direction: column; }
.sub { flex: none; padding-left: 4px; height: 29px; }
.sub .sep { margin: 0 -1px; }
.pick { display: flex; align-items: center; gap: 6px; margin-left: -4px; }
.sel { display: flex; align-items: center; background: #fff; height: 22px; padding-right: 4px; }
.sel select { appearance: none; padding-left: 2px; width: 52px; outline: 0; }
.pick .sel { margin-right: -2px; }
.panes { flex: 1; min-height: 0; display: flex; gap: 4px; }
.list { width: 184px; flex: none; display: flex; flex-direction: column; border-right: 1px solid #aaa; }
.search { display: flex; height: 31px; padding: 5px 2px 2px 1px; gap: 2px; background: #f8f8f8; }
.search input { width: 157px; height: 24px; border: 1px solid #7a7a7a; background: #fff; padding: 0 2px 3px; }
.search input::placeholder, .cort input::placeholder { color: #808080; opacity: 1; }
.search button { width: 22px; height: 22px; justify-content: center; background: #e4f1fb; }
.items { flex: 1; min-height: 0; border: 1px solid #828790; background: #fff; display: flex; }
.items ul { flex: 1; padding-left: 31px; }
.items li {
  height: 16px; display: flex; align-items: center; padding-left: 12px;
  background:
    repeating-linear-gradient(#909090 0 1px, transparent 1px 2px) 0 0 / 1px 100% no-repeat,
    repeating-linear-gradient(90deg, #909090 0 1px, transparent 1px 2px) 0 8px / 11px 1px no-repeat;
}
.items li.cur { background-size: 1px 8px, 11px 1px; padding-left: 9px; }
.items li.cur span { display: flex; align-items: center; background: #316ac5; padding: 0 5px 0 3px; height: 16px; }
.items li svg { width: 12px; height: 12px; margin-right: 7px; }
.scroll { width: 17px; background: #f0f0f0; display: flex; flex-direction: column; align-items: center; padding: 3px 0; }
.scroll svg { width: 12px; height: 12px; }
.scroll b { background: #cdcdcd; width: 100%; }
.scroll i { flex: 290; }
.scroll b { flex: 245; }
.scroll svg:last-child { margin-top: 3px; }
.low { margin-right: 1px; }
.high b { background: #bebebe; flex: 395; }
.high i { flex: 137; }
.high svg { margin: 0 0 2px; }

.props { flex: 1; min-width: 0; display: flex; flex-direction: column; background: #fff; border-left: 1px solid #ccc; margin-right: 2px; }
.tab { width: 64px; height: 21px; border: 1px solid #d0d0d0; border-width: 1px 1px 0 0; padding: 2px 0 0 6px; flex: none; }
.sheet { flex: 1; min-height: 0; margin: 4px 3px 1px 2px; border: 1px solid #9a9a9a; display: flex; justify-content: space-between; }
table { border-collapse: separate; border-spacing: 0; flex: 1; table-layout: fixed; align-self: flex-start; }
th, td { height: 19px; padding: 1px 0 0; border: solid #c0c0c0; border-width: 0 1px 1px 0; font-weight: 400; text-align: left; line-height: 16px; white-space: nowrap; }
thead th { height: 24px; text-align: center; background: linear-gradient(#fff, #ececec); }
thead .n { width: 22px; }
thead .k { width: 191px; }
thead .v { background: linear-gradient(#fbd890, #f0b850); }
tbody th { text-align: center; background: #f7f7f7; }
td:nth-child(2) { padding-left: 20px; }
td:nth-child(3) { padding-left: 2px; }
tr.cur th { background: #ffd488; color: #70105a; }
tr.cur td:nth-child(2) { background: #0078d7; color: #fff; }
tr.cur td:nth-child(3) { background: #dcebfa; }
.key td:nth-child(2) { color: #00f; }
.fold td:nth-child(2) { color: #808080; padding-left: 2px; }
.fold td button { width: 13px; height: 13px; border: 1px solid #aaa; margin-right: 5px; vertical-align: middle; background: linear-gradient(#000, #000) 50% 50% / 7px 1px no-repeat, linear-gradient(#000, #000) 50% 50% / 1px 7px no-repeat; }

.dlg {
  position: absolute; left: 596px; right: 22px; top: 49px; bottom: 3px; border: 1px solid #2a3038;
  background: linear-gradient(#9ab3d0, #b9cfe9 32px); box-shadow: inset 1px 1px #fff, inset -1px -1px #5fd0f0;
  display: flex; flex-direction: column; padding: 2px 9px 7px 8px;
}
.dlg h2 { margin: 0; font-size: 12px; font-weight: 400; height: 29px; padding-top: 9px; }
.dbody { flex: 1; min-height: 0; display: flex; flex-direction: column; border: 3px solid #fafafa; background: #f0f0f0; outline: 1px solid #ddd; padding-top: 3px; }
.dbody .bar { height: 28px; align-self: flex-start; flex: none; }
.d1 { padding: 0 6px 0 7px; gap: 6px; }
.d1 > .car { margin: 0 -3px 0 0; }
.d1 .sel select { width: 69px; }
.d1 .sel { padding-right: 3px; }
.d1 .sep, .d2 .sep { margin: 0 -3px 0 2px; }
.d1 .close { margin-left: -1px; }
.d1 .wide { margin: 0 -1px 0 2px; }
.d2 { padding: 0 4px 0 7px; gap: 5px; }
.d2 .on + button { margin: 0 2px 0 2px; }
.d2 .wide { margin: 0 -1px 0 2px; }
.d2 span { margin-right: -3px; }
.d2 .on:last-child { padding: 0 3px; }
.canvas { flex: 1; min-height: 0; margin: 0 0 0 1px; border: 2px solid #f00; background: #15181f; overflow: hidden; }
.canvas svg { font-family: "Liberation Sans", "Noto Sans CJK SC", sans-serif; }
.dbody .d3 { margin: 1px 0 0 2px; gap: 4px; height: 25px; }
.d3 button.on { padding: 0 3px; }
.d3 button:disabled { margin-right: 7px; }
.dstat { height: 23px; flex: none; margin-top: 3px; display: flex; gap: 2px; border: 1px solid #ddd; background: #f0f0f0; }
.dstat span { background: linear-gradient(#fff, #f0f0f0); padding: 4px 2px 0 3px; width: 95px; white-space: nowrap; }
.dstat span + span { flex: 1; border-left: 1px solid #ccc; padding-left: 1px; }
.dstat svg { align-self: flex-end; }

.status { height: 22px; flex: none; display: flex; gap: 3px; padding: 2px 0 1px; position: relative; }
.status > span { border: 1px solid #d4d4d4; padding-left: 1px; line-height: 17px; background: #f8f8f8; }
.status > span:nth-child(1) { width: 147px; }
.status > span:nth-child(2) { width: 77px; }
.status > span:nth-child(3) { width: 98px; }
.status > span:nth-child(4) { width: 47px; }
.status > span:nth-child(5) { flex: 1; }
.ime { position: absolute; right: 0; bottom: 0; height: 24px; width: 186px; display: flex; align-items: center; gap: 6px; background: #fff; border: 1px solid #b8cfe8; padding-right: 4px; }
.ime b { color: #1e78c8; font-size: 15px; width: 16px; }
.ime svg:first-child { margin-left: -1px; }

.task { height: 40px; flex: none; display: flex; align-items: center; background: #020b0f; color: #fff; }
.start { width: 48px; height: 40px; justify-content: center; background: #000; }
.cort { width: 344px; height: 40px; background: #333; display: flex; align-items: center; padding: 0 14px 0 9px; gap: 5px; }
.cort input { flex: 1; min-width: 0; font-size: 14px; color: #fff; }
.cort input::placeholder { color: #a0a0a0; }
.apps { display: flex; gap: 1px; padding-left: 2px; flex: 1; }
.apps button { width: 48px; height: 40px; justify-content: center; border-bottom: 2px solid transparent; }
.apps .gap { margin-right: 5px; }
.apps svg { width: 24px; height: 24px; }
.apps .run { background: linear-gradient(#76b9ed, #76b9ed) 50% 100% / 40px 2px no-repeat; background-origin: border-box; }
.apps .act { background-color: #343d40; background-size: 48px 2px; }
.cpu, .clock { text-align: center; line-height: 17px; }
.cpu { width: 60px; margin-right: 12px; }
.tray { display: flex; align-items: center; gap: 8px; }
.tray svg { fill: none; stroke: #fff; }
.tray .so { stroke: none; margin-left: 6px; }
.tray span { font-size: 14px; margin-left: 1px; }
.clock { width: 64px; margin-left: 14px; line-height: 19px; }
.note { height: 40px; width: 54px; padding-left: 17px; position: relative; border-right: 1px solid #555; margin-right: 4px; background: #000; }
.note span { position: absolute; left: 20px; top: 17px; width: 24px; height: 18px; border-radius: 9px; border: 1px solid #888; background: #333; font-weight: 700; line-height: 16px; text-align: center; }
```
